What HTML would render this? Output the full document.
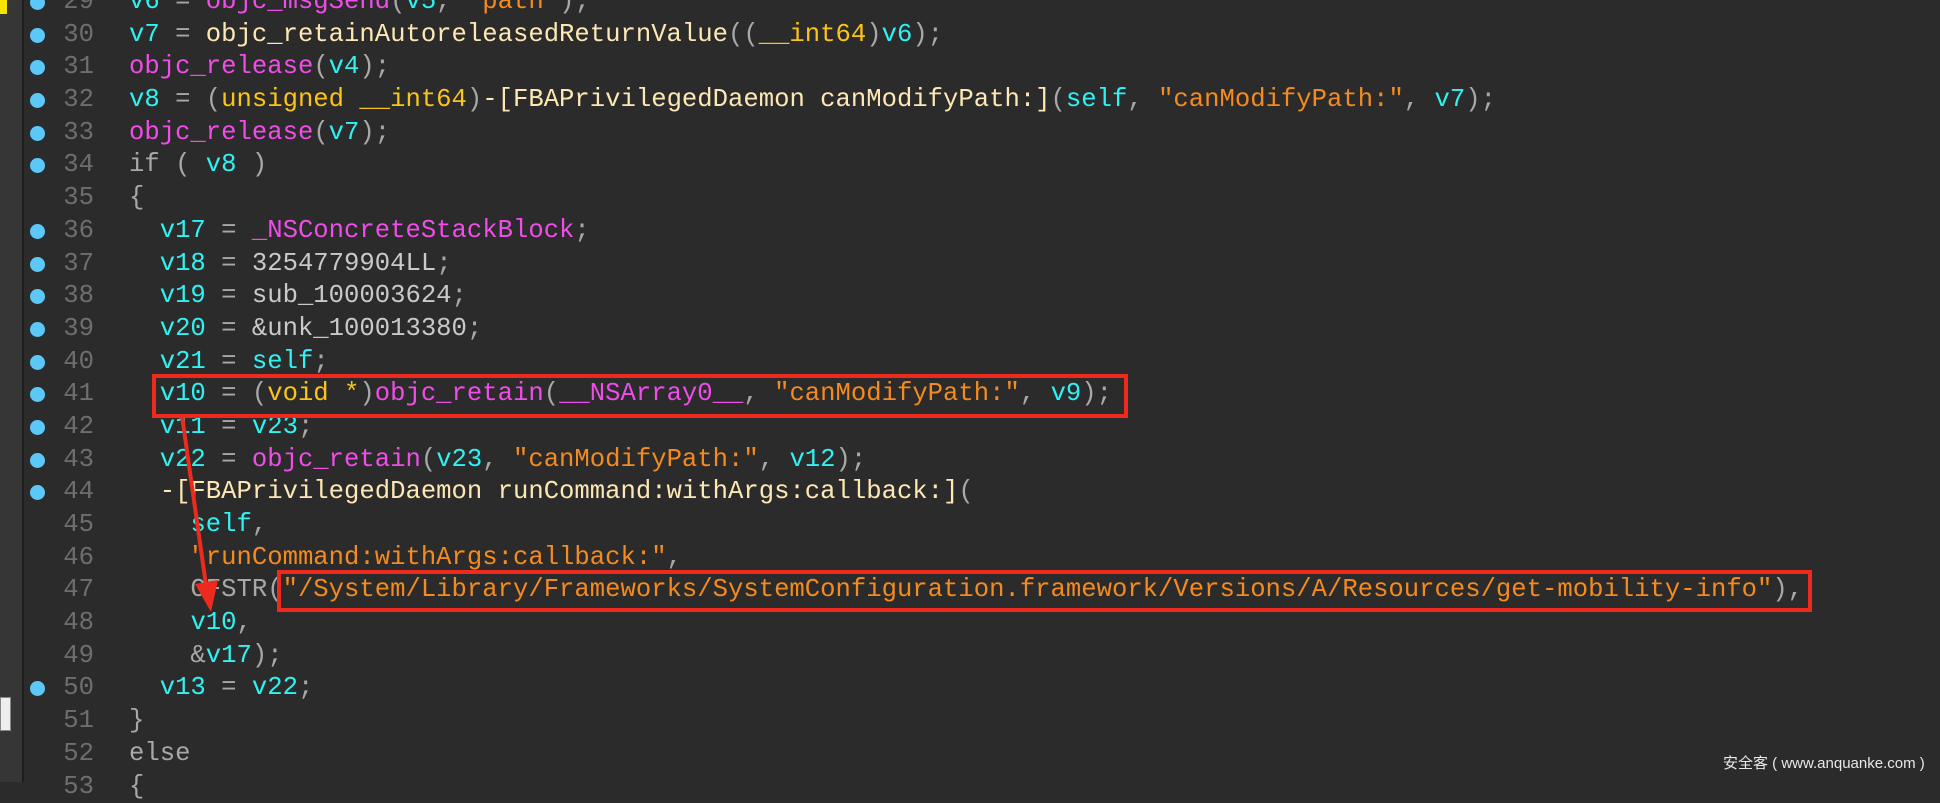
<!DOCTYPE html>
<html><head><meta charset="utf-8"><style>
html,body{margin:0;padding:0;}
body{width:1940px;height:782px;background:#2b2b2b;overflow:hidden;position:relative;font-family:"Liberation Mono",monospace;}
.side{position:absolute;left:0;top:0;width:22px;height:782px;background:#363636;border-right:2px solid #1e1e1e;}
.yel{position:absolute;left:0;top:0;width:7px;height:14px;background:#f5e400;}
.wbox{position:absolute;left:0;top:697px;width:9px;height:32px;background:#eee;border:1px solid #888;}
.code{position:absolute;left:0;top:-14px;width:1940px;font-size:25.6px;line-height:32.7px;color:#a8a8a8;}
.l{position:relative;height:32.7px;}
.n{position:absolute;left:58px;width:36px;text-align:right;color:#6e6e6e;}
.d{position:absolute;left:30px;top:9px;width:15px;height:15px;border-radius:50%;background:#5cc8fa;}
.t{position:absolute;left:129px;white-space:pre;}
.c{color:#2ff2f2}.m{color:#f04ce8}.y{color:#fde7b4}.k{color:#fcc418}.s{color:#f58a1f}.g{color:#a8a8a8}.p{color:#c9c9c9}
.box{position:absolute;border:4px solid #ee2a1e;box-sizing:border-box;}
.wm{position:absolute;left:1723px;top:752px;white-space:nowrap;font-family:"Liberation Sans","Noto Sans CJK SC",sans-serif;font-size:15px;color:#e8e8e8;}
</style></head><body>
<div class="side"></div><div class="yel"></div><div class="wbox"></div>
<div class="code"><div class="l"><span class="d"></span><span class="n">29</span><span class="t"><span class="c">v6</span> = <span class="m">objc_msgSend</span>(<span class="c">v5</span>, <span class="s">"path"</span>);</span></div><div class="l"><span class="d"></span><span class="n">30</span><span class="t"><span class="c">v7</span> = <span class="y">objc_retainAutoreleasedReturnValue</span>((<span class="k">__int64</span>)<span class="c">v6</span>);</span></div><div class="l"><span class="d"></span><span class="n">31</span><span class="t"><span class="m">objc_release</span>(<span class="c">v4</span>);</span></div><div class="l"><span class="d"></span><span class="n">32</span><span class="t"><span class="c">v8</span> = (<span class="k">unsigned __int64</span>)<span class="y">-[FBAPrivilegedDaemon canModifyPath:]</span>(<span class="c">self</span>, <span class="s">"canModifyPath:"</span>, <span class="c">v7</span>);</span></div><div class="l"><span class="d"></span><span class="n">33</span><span class="t"><span class="m">objc_release</span>(<span class="c">v7</span>);</span></div><div class="l"><span class="d"></span><span class="n">34</span><span class="t">if ( <span class="c">v8</span> )</span></div><div class="l"><span class="n">35</span><span class="t">{</span></div><div class="l"><span class="d"></span><span class="n">36</span><span class="t">  <span class="c">v17</span> = <span class="m">_NSConcreteStackBlock</span>;</span></div><div class="l"><span class="d"></span><span class="n">37</span><span class="t">  <span class="c">v18</span> = <span class="p">3254779904LL</span>;</span></div><div class="l"><span class="d"></span><span class="n">38</span><span class="t">  <span class="c">v19</span> = <span class="p">sub_100003624</span>;</span></div><div class="l"><span class="d"></span><span class="n">39</span><span class="t">  <span class="c">v20</span> = <span class="p">&amp;unk_100013380</span>;</span></div><div class="l"><span class="d"></span><span class="n">40</span><span class="t">  <span class="c">v21</span> = <span class="c">self</span>;</span></div><div class="l"><span class="d"></span><span class="n">41</span><span class="t">  <span class="c">v10</span> = (<span class="k">void *</span>)<span class="m">objc_retain</span>(<span class="m">__NSArray0__</span>, <span class="s">"canModifyPath:"</span>, <span class="c">v9</span>);</span></div><div class="l"><span class="d"></span><span class="n">42</span><span class="t">  <span class="c">v11</span> = <span class="c">v23</span>;</span></div><div class="l"><span class="d"></span><span class="n">43</span><span class="t">  <span class="c">v22</span> = <span class="m">objc_retain</span>(<span class="c">v23</span>, <span class="s">"canModifyPath:"</span>, <span class="c">v12</span>);</span></div><div class="l"><span class="d"></span><span class="n">44</span><span class="t">  <span class="y">-[FBAPrivilegedDaemon runCommand:withArgs:callback:]</span>(</span></div><div class="l"><span class="n">45</span><span class="t">    <span class="c">self</span>,</span></div><div class="l"><span class="n">46</span><span class="t">    <span class="s">"runCommand:withArgs:callback:"</span>,</span></div><div class="l"><span class="n">47</span><span class="t">    CFSTR(<span class="s">"/System/Library/Frameworks/SystemConfiguration.framework/Versions/A/Resources/get-mobility-info"</span>),</span></div><div class="l"><span class="n">48</span><span class="t">    <span class="c">v10</span>,</span></div><div class="l"><span class="n">49</span><span class="t">    &amp;<span class="c">v17</span>);</span></div><div class="l"><span class="d"></span><span class="n">50</span><span class="t">  <span class="c">v13</span> = <span class="c">v22</span>;</span></div><div class="l"><span class="n">51</span><span class="t">}</span></div><div class="l"><span class="n">52</span><span class="t">else</span></div><div class="l"><span class="n">53</span><span class="t">{</span></div></div>
<div class="box" style="left:152px;top:374px;width:976px;height:44px;"></div>
<div class="box" style="left:277px;top:570px;width:1535px;height:42px;"></div>
<svg style="position:absolute;left:0;top:0" width="1940" height="782">
<line x1="182" y1="416" x2="206" y2="585" stroke="#ee2a1e" stroke-width="4"/>
<polygon points="195,584 218,580 211,612" fill="#ee2a1e"/>
</svg>
<div class="wm">安全客 ( www.anquanke.com )</div>
</body></html>
